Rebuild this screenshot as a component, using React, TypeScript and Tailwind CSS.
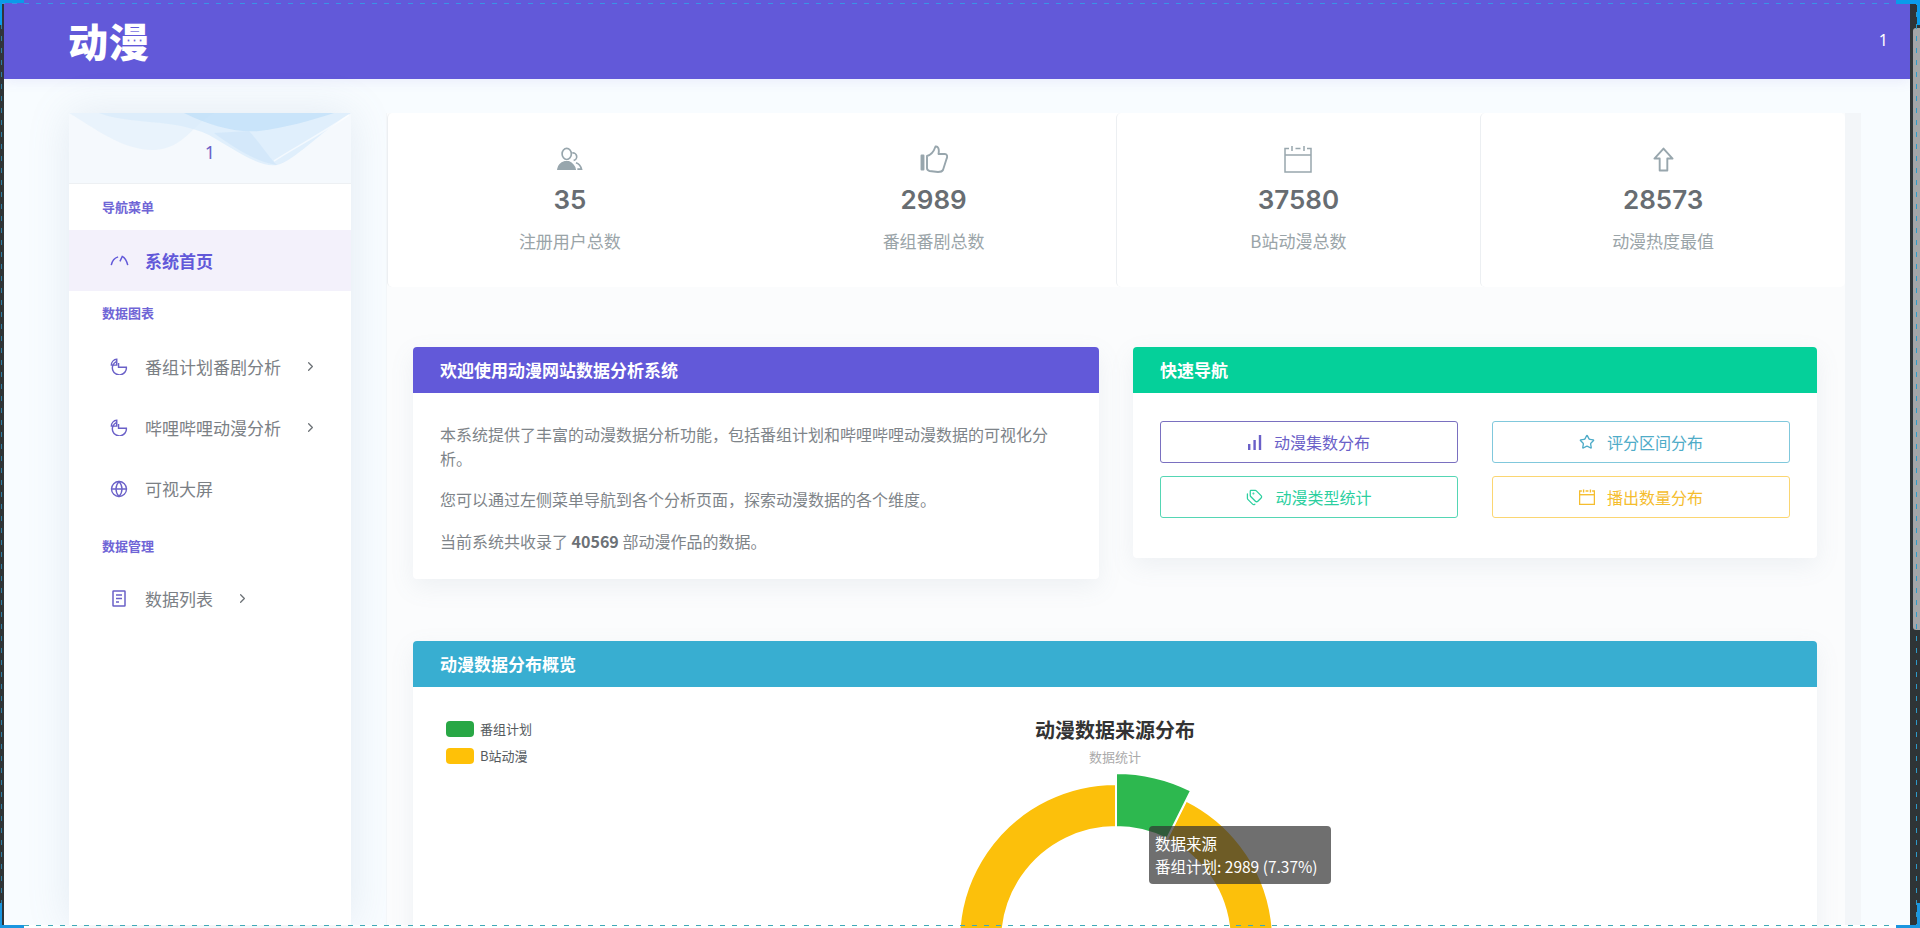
import { ChevronRight, Globe, Star, Tags } from "lucide-react"
import type { ReactNode } from "react"

const purple = "#6259d9"

function GaugeIcon() {
  return (
    <svg viewBox="0 0 20 12" className="h-[11px] w-[19px]" fill="none" stroke="currentColor" strokeWidth="1.6">
      <path d="M1 11 C2 6 5 3 8.5 2" />
      <path d="M11.5 2 L15 1.6" strokeWidth="0" />
      <path d="M10.5 7 L13 1.5 C16 3 18 7 19 11" />
    </svg>
  )
}

function PieIcon() {
  return (
    <svg viewBox="0 0 20 18" className="h-[17px] w-[18px]" fill="none" stroke="currentColor" strokeWidth="1.6">
      <path d="M7 3.5 A7.8 7.8 0 1 0 18.2 9.8 L9.5 9.8 L9.5 5" />
      <path d="M1.5 7.5 A6.5 6.5 0 0 1 7.5 1 L7.5 7.5 Z" />
    </svg>
  )
}

function DocIcon() {
  return (
    <svg viewBox="0 0 14 17" className="h-[17px] w-[14px]" fill="none" stroke="currentColor" strokeWidth="1.5">
      <rect x="1" y="1" width="12" height="15" rx="0.5" />
      <path d="M4 5h6M4 8.5h6M4 12h3" />
    </svg>
  )
}

function UsersIcon() {
  return (
    <svg viewBox="0 0 28 26" className="h-[24px] w-[27px]" fill="none" stroke="#98a6ad" strokeWidth="1.8">
      <ellipse cx="11" cy="7.5" rx="5" ry="6" />
      <path d="M17 6.5 a4 4 0 1 1 1.5 8" />
      <path d="M1.5 24 C2 19 6 17 9 16 L13 16 C15 17 19 19 20 24 Z" fill="#98a6ad" />
      <path d="M21 17 C24 18 26 20 27 24 L22.5 24" />
    </svg>
  )
}

function ThumbIcon() {
  return (
    <svg viewBox="0 0 28 28" className="h-[28px] w-[28px]" fill="none" stroke="#98a6ad" strokeWidth="1.9" strokeLinejoin="round">
      <path d="M1.5 10.5 h2 v14 h-2 z" fill="#98a6ad" />
      <path d="M7 11 C11 10 14 6 15.5 1.5 C18 1 19.5 4 18.5 9 L25 9 C27.5 9 27.5 12 26.5 14 L23 25 C22 27 20 27 18 27 L9.5 26 C7.5 25.5 7 24.5 7 23 Z" />
    </svg>
  )
}

function CalendarIcon({ className, strokeWidth = 1.5 }: { className: string; strokeWidth?: number }) {
  return (
    <svg viewBox="0 0 28 28" className={className} fill="none" stroke="currentColor" strokeWidth={strokeWidth}>
      <path d="M5 3.5 H1 V27 H27 V3.5 H23" />
      <path d="M1 10 H27" />
      <path d="M8 1 V6 M20 1 V6 M11.5 3.5 H16.5" />
    </svg>
  )
}

function UpIcon() {
  return (
    <svg viewBox="0 0 22 26" className="h-[25px] w-[21px]" fill="none" stroke="#98a6ad" strokeWidth="2" strokeLinejoin="round">
      <path d="M11 1.5 L20.5 12 H15 V24.5 H7 V12 H1.5 Z" />
    </svg>
  )
}

function BarsIcon() {
  return (
    <svg viewBox="0 0 14 15" className="h-[15px] w-[14px]" fill="currentColor">
      <rect x="0" y="9" width="2.4" height="6" />
      <rect x="5.4" y="5" width="2.4" height="10" />
      <rect x="10.8" y="0" width="2.4" height="15" />
    </svg>
  )
}

function NavItem({ icon, label, arrow }: { icon: ReactNode; label: string; arrow?: boolean }) {
  return (
    <div className="flex h-[61px] items-center pl-[40px] text-[17px] text-[#7b8085]">
      <span className="flex w-[36px] shrink-0 justify-start pl-[1px] text-[#6a60c8]">{icon}</span>
      <span>{label}</span>
      {arrow && <ChevronRight className="ml-[22px] h-[15px] w-[15px] text-[#6c7176]" strokeWidth={2} />}
    </div>
  )
}

function NavLabel({ text, className }: { text: string; className: string }) {
  return <div className={`pl-[33px] text-[13px] font-bold text-[#6f65d6] ${className}`}>{text}</div>
}

function Stat({ icon, value, label, border }: { icon: ReactNode; value: string; label: string; border?: boolean }) {
  return (
    <div className={`flex flex-1 flex-col items-center rounded-[5px] pt-[32px] ${border ? "border-l border-[#eceff2]" : ""}`}>
      <div className="flex h-[28px] items-center text-[#98a6ad]">{icon}</div>
      <div className="mt-[9px] font-['Inter',sans-serif] text-[26px] leading-[36px] font-semibold text-[#686d72]">{value}</div>
      <div className="mt-[11px] text-[17px] leading-[24px] text-[#9aa4a8]">{label}</div>
    </div>
  )
}

function CardHead({ title, bg }: { title: string; bg: string }) {
  return <div className={`flex h-[46px] items-center rounded-t-[4px] px-[27px] text-[17px] font-bold text-white ${bg}`}>{title}</div>
}

function NavButton({ icon, label, className }: { icon: ReactNode; label: string; className: string }) {
  return (
    <div className={`flex h-[42px] items-center justify-center gap-[12px] rounded-[3px] border bg-white text-[16px] ${className}`}>
      {icon}
      <span>{label}</span>
    </div>
  )
}

export default function App() {
  return (
    <div className="relative flex h-[928px] w-[1920px] overflow-hidden bg-white font-['Noto_Sans_CJK_SC','Liberation_Sans',sans-serif]">
      <div className="h-[925px] w-[4px] shrink-0 bg-[#2f3436]" />

      <div className="flex h-[925px] w-[1906px] shrink-0 flex-col bg-[#f8fcff]">
        <header className="flex h-[79px] shrink-0 items-center justify-between pr-[22px] pl-[64px] shadow-[0_2px_12px_rgba(98,89,217,0.1)]" style={{ backgroundColor: purple }}>
          <span className="text-[40px] leading-none font-black tracking-[1px] text-white">动漫</span>
          <span className="font-['Noto_Sans',sans-serif] text-[16px] text-white">1</span>
        </header>

        <div className="flex min-h-0 flex-1 gap-[35px] pt-[34px] pl-[65px]">
          {/* sidebar */}
          <aside className="w-[282px] shrink-0 bg-white shadow-[0_0_40px_rgba(120,145,175,0.16)]">
            <div className="relative flex h-[71px] items-start justify-center overflow-hidden border-b border-[#edf0f3] bg-[#f5f9fd] pt-[27px]">
              <svg viewBox="0 0 282 53" className="absolute top-0 left-0 h-[53px] w-[282px]">
                <path d="M0 0 C25 15 55 38 85 37 C115 36 125 10 145 0 Z" fill="#e6f1fb" opacity="0.8" />
                <path d="M30 0 C60 12 105 5 140 22 C165 36 190 55 208 52 C225 48 250 20 282 0 Z" fill="#d8ebfb" opacity="0.75" />
                <path d="M115 0 C140 12 165 20 190 18 C215 15 240 8 265 0 Z" fill="#b9dcf8" opacity="0.6" />
                <path d="M180 18 C195 35 200 45 208 52 C190 50 165 35 145 20 Z" fill="#cfe5fa" opacity="0.7" />
                <path d="M205 48 C225 35 245 25 280 2" stroke="#ffffff" strokeWidth="1.5" fill="none" opacity="0.6" />
              </svg>
              <span className="relative font-['Noto_Sans',sans-serif] text-[18px] leading-[24px] text-[#6a60c8]">1</span>
            </div>
            <NavLabel text="导航菜单" className="pt-[13px] pb-[13px] leading-[20px]" />
            <div className="flex h-[61px] items-center bg-[#f3f1fb] pl-[40px] text-[17px] font-semibold" style={{ color: purple }}>
              <span className="flex w-[36px] justify-start pl-[1px]"><GaugeIcon /></span>
              <span>系统首页</span>
            </div>
            <NavLabel text="数据图表" className="pt-[12px] pb-[13px] leading-[20px]" />
            <NavItem icon={<PieIcon />} label="番组计划番剧分析" arrow />
            <NavItem icon={<PieIcon />} label="哔哩哔哩动漫分析" arrow />
            <NavItem icon={<Globe className="h-[18px] w-[18px]" strokeWidth={1.8} />} label="可视大屏" />
            <NavLabel text="数据管理" className="pt-[17px] pb-[12px] leading-[20px]" />
            <NavItem icon={<span className="pl-[2px]"><DocIcon /></span>} label="数据列表" arrow />
          </aside>

          {/* main */}
          <main className="w-[1475px] shrink-0 bg-[#f3f6f9] pr-[16px] pl-[1px]">
            <div className="h-full bg-[#fbfcfd]">
              <div className="flex h-[174px] rounded-[5px] bg-white">
                <Stat icon={<UsersIcon />} value="35" label="注册用户总数" border />
                <Stat icon={<ThumbIcon />} value="2989" label="番组番剧总数" />
                <Stat icon={<CalendarIcon className="h-[28px] w-[28px]" />} value="37580" label="B站动漫总数" border />
                <Stat icon={<UpIcon />} value="28573" label="动漫热度最值" border />
              </div>

              <div className="mt-[60px] flex items-start gap-[34px] pr-[28px] pl-[26px]">
                <section className="h-[232px] w-[686px] rounded-[4px] bg-white shadow-[0_8px_24px_rgba(120,140,160,0.1)]">
                  <CardHead title="欢迎使用动漫网站数据分析系统" bg="bg-[#6259d9]" />
                  <div className="px-[27px] pt-[29px] text-[16px] leading-[24px] text-[#7e8489]">
                    <p>本系统提供了丰富的动漫数据分析功能，包括番组计划和哔哩哔哩动漫数据的可视化分析。</p>
                    <p className="mt-[17px]">您可以通过左侧菜单导航到各个分析页面，探索动漫数据的各个维度。</p>
                    <p className="mt-[18px]">当前系统共收录了 <strong className="font-bold text-[#6c7176]">40569</strong> 部动漫作品的数据。</p>
                  </div>
                </section>

                <section className="h-[211px] w-[684px] rounded-[4px] bg-white shadow-[0_8px_24px_rgba(120,140,160,0.1)]">
                  <CardHead title="快速导航" bg="bg-[#05d09a]" />
                  <div className="grid grid-cols-2 gap-x-[34px] gap-y-[13px] px-[27px] pt-[28px]">
                    <NavButton icon={<BarsIcon />} label="动漫集数分布" className="border-[#7a70c0] text-[#6a60c8]" />
                    <NavButton icon={<Star className="h-[16px] w-[16px]" strokeWidth={2} />} label="评分区间分布" className="border-[#80c8dc] text-[#4facc8]" />
                    <NavButton icon={<Tags className="h-[17px] w-[17px]" strokeWidth={1.8} />} label="动漫类型统计" className="border-[#55d6b4] text-[#2ccf9f]" />
                    <NavButton icon={<CalendarIcon className="h-[16px] w-[16px] text-[#f5bd2e]" strokeWidth={2.4} />} label="播出数量分布" className="border-[#fbd672] text-[#f5bd2e]" />
                  </div>
                </section>
              </div>

              <section className="mt-[62px] mr-[28px] ml-[26px] rounded-[4px] bg-white shadow-[0_8px_24px_rgba(120,140,160,0.1)]">
                <CardHead title="动漫数据分布概览" bg="bg-[#38aed1]" />
                <div className="relative flex h-[300px] flex-col items-center pt-[30px]">
                  <div className="absolute top-[34px] left-[33px] flex flex-col gap-[11px] text-[13px] leading-[16px] text-[#555a5e]">
                    <div className="flex items-center gap-[6px]"><span className="h-[16px] w-[28px] rounded-[4px] bg-[#28a745]" />番组计划</div>
                    <div className="flex items-center gap-[6px]"><span className="h-[16px] w-[28px] rounded-[4px] bg-[#ffc107]" />B站动漫</div>
                  </div>
                  <div className="text-[20px] leading-[26px] font-bold text-[#333333]">动漫数据来源分布</div>
                  <div className="mt-[5px] text-[13px] leading-[18px] text-[#aaaaaa]">数据统计</div>
                  <svg viewBox="0 0 340 340" className="absolute top-[83px] left-[533px] h-[340px] w-[340px]">
                    <path d="M240.1 30.5 A157 157 0 1 1 170 14 L170 57 A114 114 0 1 0 220.9 69 Z" fill="#fcc00b" stroke="#ffffff" strokeWidth="2" />
                    <path d="M170 3 A168 168 0 0 1 245 20.7 L220.9 69 A114 114 0 0 0 170 57 Z" fill="#2db84f" stroke="#ffffff" strokeWidth="2" />
                  </svg>
                  <div className="absolute top-[139px] left-[736px] w-[182px] rounded-[4px] bg-[rgba(50,50,50,0.7)] px-[6px] py-[6px] text-[15.5px] leading-[23px] whitespace-nowrap text-white">
                    <div>数据来源</div>
                    <div>番组计划: 2989 (7.37%)</div>
                  </div>
                </div>
              </section>
            </div>
          </main>
        </div>
      </div>

      <div className="relative h-[925px] w-[10px] shrink-0 bg-[#2f3436]">
        <div className="mt-[28px] ml-[3px] h-[602px] w-[7px] rounded-l-[3px] bg-[#a3a6a8]" />
      </div>

      {/* selection frame drawn over the page */}
      <div className="absolute top-[3px] left-0 h-[1px] w-full bg-[repeating-linear-gradient(90deg,#3a93e6_0_5px,transparent_5px_12px)]" />
      <div className="absolute top-[925px] left-0 h-[1px] w-full bg-[repeating-linear-gradient(90deg,#3fa9b8_0_5px,transparent_5px_12px)]" />
      <div className="absolute top-0 left-[1px] h-full w-[1px] bg-[repeating-linear-gradient(180deg,#2e7ea3_0_5px,transparent_5px_12px)]" />
      <div className="absolute top-0 right-[3px] h-full w-[1px] bg-[repeating-linear-gradient(180deg,#2e9ac7_0_5px,transparent_5px_12px)]" />
      <div className="absolute top-0 left-0 h-[3px] w-[24px] bg-[#0a9bea]" />
      <div className="absolute top-0 left-0 h-[25px] w-[2px] bg-[#0a9bea]" />
      <div className="absolute top-0 right-0 h-[4px] w-[24px] bg-[#0a9bea]" />
      <div className="absolute top-0 right-0 h-[25px] w-[3px] bg-[#0a9bea]" />
      <div className="absolute bottom-0 left-0 h-[3px] w-[24px] bg-[#1a96e0]" />
      <div className="absolute bottom-0 left-0 h-[25px] w-[2px] bg-[#1a96e0]" />
      <div className="absolute right-0 bottom-0 h-[3px] w-[24px] bg-[#1a96e0]" />
      <div className="absolute right-0 bottom-0 h-[25px] w-[3px] bg-[#1a96e0]" />
    </div>
  )
}
